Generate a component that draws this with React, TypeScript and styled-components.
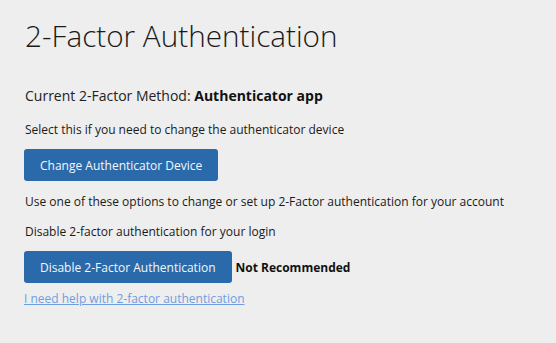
import styled, { createGlobalStyle } from "styled-components";

const GlobalStyle = createGlobalStyle`
  html, body {
    margin: 0;
    padding: 0;
    background: #eeeeee;
  }
  body {
    font-family: "Open Sans", "Liberation Sans", sans-serif;
    color: #111;
  }
`;

const Page = styled.div`
  width: 556px;
  height: 343px;
  box-sizing: border-box;
  padding: 14px 24px 0 24px;
  display: flex;
  flex-direction: column;
`;

const Title = styled.h1`
  margin: 0 0 0 1px;
  font-size: 29.7px;
  font-weight: 300;
  line-height: 44px;
  color: #1a1a1a;
`;

const Method = styled.p`
  margin: 28px 0 0 1px;
  font-size: 14px;
  line-height: 20px;
  color: #222;

  & > b {
    font-weight: 700;
    color: #111;
  }
`;

const Note = styled.p<{ $top: number }>`
  margin: ${(p) => p.$top}px 0 0 1px;
  font-size: 12px;
  line-height: 18px;
  color: #1a1a1a;
`;

const Row = styled.div<{ $top: number }>`
  margin-top: ${(p) => p.$top}px;
  display: flex;
  align-items: center;
  gap: 4px;
`;

const Button = styled.button`
  font-family: "Open Sans", "Liberation Sans", sans-serif;
  font-size: 12px;
  color: #f4f7fb;
  background: #2a6aaa;
  border: none;
  border-radius: 3px;
  height: 32px;
  padding: 0 16px;
  cursor: pointer;
`;

const Warning = styled.span`
  font-size: 12px;
  font-weight: 700;
  color: #111;
`;

const HelpLink = styled.a`
  margin: 7px 0 0 0;
  font-size: 12px;
  line-height: 18px;
  color: #6f9ee0;
  text-decoration: underline;
  align-self: flex-start;
`;

export default function App() {
  return (
    <>
      <GlobalStyle />
      <Page>
        <Title>2-Factor Authentication</Title>
        <Method>
          Current 2-Factor Method: <b>Authenticator app</b>
        </Method>
        <Note $top={15}>Select this if you need to change the authenticator device</Note>
        <Row $top={10}>
          <Button>Change Authenticator Device</Button>
        </Row>
        <Note $top={12}>
          Use one of these options to change or set up 2-Factor authentication for your account
        </Note>
        <Note $top={12}>Disable 2-factor authentication for your login</Note>
        <Row $top={10}>
          <Button>Disable 2-Factor Authentication</Button>
          <Warning>Not Recommended</Warning>
        </Row>
        <HelpLink href="#">I need help with 2-factor authentication</HelpLink>
      </Page>
    </>
  );
}
